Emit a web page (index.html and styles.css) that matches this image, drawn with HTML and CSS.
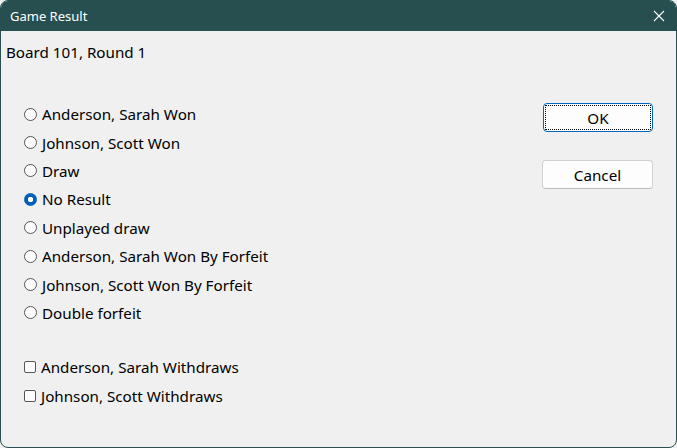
FILE: index.html
```html
<!DOCTYPE html>
<html>
<head>
<meta charset="utf-8">
<link rel="stylesheet" href="styles.css">
</head>
<body>
<div class="window">
  <div class="titlebar">
    <span class="title">Game Result</span>
    <svg class="close" width="12" height="12" viewBox="0 0 12 12"><path d="M1 1 L11 11 M11 1 L1 11" stroke="#ffffff" stroke-width="1.1" fill="none"/></svg>
  </div>
  <div class="content">
    <div class="left">
      <div class="board">Board 101, Round 1</div>
      <div class="options">
        <div class="row"><span class="radio"></span><span>Anderson, Sarah Won</span></div>
        <div class="row"><span class="radio"></span><span>Johnson, Scott Won</span></div>
        <div class="row"><span class="radio"></span><span>Draw</span></div>
        <div class="row"><span class="radio checked"></span><span>No Result</span></div>
        <div class="row"><span class="radio"></span><span>Unplayed draw</span></div>
        <div class="row"><span class="radio"></span><span>Anderson, Sarah Won By Forfeit</span></div>
        <div class="row"><span class="radio"></span><span>Johnson, Scott Won By Forfeit</span></div>
        <div class="row"><span class="radio"></span><span>Double forfeit</span></div>
      </div>
      <div class="checks">
        <div class="row"><span class="check"></span><span>Anderson, Sarah Withdraws</span></div>
        <div class="row"><span class="check"></span><span>Johnson, Scott Withdraws</span></div>
      </div>
    </div>
    <div class="buttons">
      <div class="btn default"><span class="focus">OK</span></div>
      <div class="btn">Cancel</div>
    </div>
  </div>
</div>
</body>
</html>
```
FILE: styles.css
```css
html, body {
  margin: 0;
  padding: 0;
  background: #f0f0f0;
}
body {
  font-family: "Noto Sans", "Open Sans", sans-serif;
  font-size: 15.2px;
  color: #000;
}
.window {
  width: 677px;
  height: 448px;
  box-sizing: border-box;
  border: 1px solid #274f50;
  border-radius: 8px;
  overflow: hidden;
  background: #f0f0f0;
  display: flex;
  flex-direction: column;
}
.titlebar {
  height: 30px;
  background: #274f50;
  display: flex;
  align-items: center;
  justify-content: space-between;
  padding: 0 11px 0 9px;
  flex: none;
}
.title {
  color: #ffffff;
  font-size: 13px;
  font-family: "Noto Sans", sans-serif;
}
.close {
  display: block;
}
.content {
  flex: 1;
  display: flex;
  justify-content: space-between;
}
.left {
  padding-left: 5px;
}
.board {
  margin-top: 11px;
  line-height: 20px;
}
.options {
  margin-top: 38px;
}
.checks {
  margin-top: 26px;
}
.row {
  height: 28.4px;
  display: flex;
  align-items: center;
  padding-left: 18px;
  white-space: nowrap;
}
.radio {
  width: 11px;
  height: 11px;
  border: 1px solid #555;
  border-radius: 50%;
  background: #fdfdfd;
  margin-right: 5px;
  flex: none;
  box-sizing: content-box;
}
.radio.checked {
  border-color: #005fb8;
  background: radial-gradient(circle, #ffffff 0 2.5px, #005fb8 3px);
}
.check {
  width: 10px;
  height: 10px;
  border: 1px solid #555;
  border-radius: 2px;
  background: #fdfdfd;
  margin-right: 5px;
  flex: none;
}
.buttons {
  padding-top: 72px;
  padding-right: 23px;
  display: flex;
  flex-direction: column;
  gap: 28px;
}
.btn {
  width: 111px;
  height: 29px;
  box-sizing: border-box;
  border: 1px solid #d0d0d0;
  border-bottom-color: #bcbcbc;
  border-radius: 4px;
  background: #fdfdfd;
  display: flex;
  align-items: center;
  justify-content: center;
  line-height: 20px;
}
.btn.default {
  width: 110px;
  margin-left: 1px;
  border: 1px solid #0067c0;
  padding: 1px;
}
.focus {
  flex: 1;
  align-self: stretch;
  border: 1px dotted #000;
  display: flex;
  align-items: center;
  justify-content: center;
}
```
